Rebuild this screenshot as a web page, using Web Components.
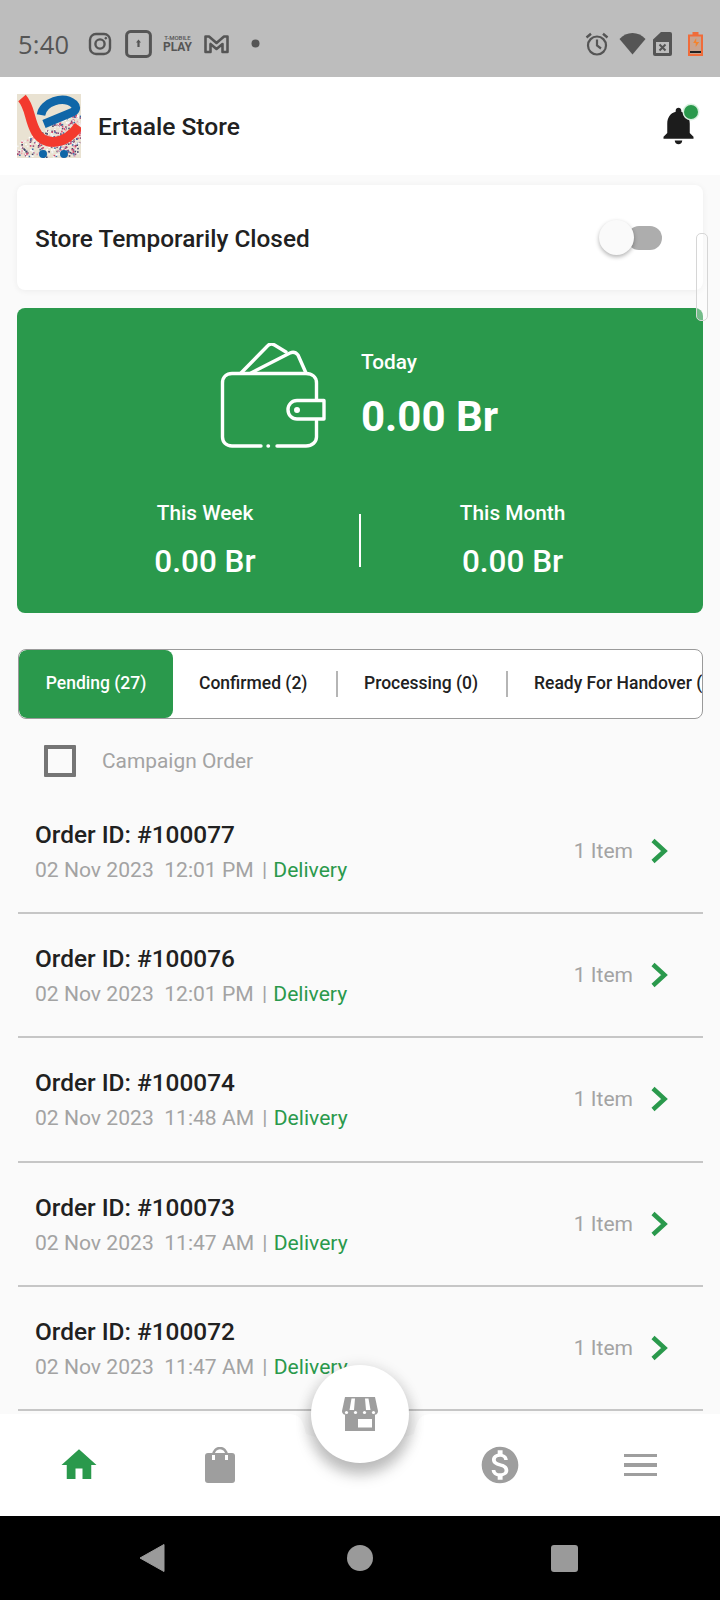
<!DOCTYPE html>
<html>
<head>
<meta charset="utf-8">
<title>Ertaale Store</title>
<style>
    html, body { margin: 0; padding: 0; background: #000; }
    body { width: 720px; height: 1600px; overflow: hidden; font-family: Roboto, "Liberation Sans", sans-serif; }
</style>
</head>
<body>
<app-screen>
    <status-bar></status-bar>
    <store-header>Ertaale Store</store-header>
    <store-toggle>Store Temporarily Closed</store-toggle>
    <earnings-card></earnings-card>
    <order-tabs></order-tabs>
    <campaign-filter>Campaign Order</campaign-filter>
    <order-row order="100077" time="12:01 PM"></order-row>
    <order-row order="100076" time="12:01 PM"></order-row>
    <order-row order="100074" time="11:48 AM"></order-row>
    <order-row order="100073" time="11:47 AM"></order-row>
    <order-row order="100072" time="11:47 AM"></order-row>
</app-screen>

<script>
const GREEN = '#2a994c';

function define(name, html, setup) {
    const template = document.createElement('template');
    template.innerHTML = html;
    customElements.define(name, class extends HTMLElement {
        constructor() {
            super();
            this.attachShadow({ mode: 'open' });
            this.shadowRoot.appendChild(template.content.cloneNode(true));
        }
        connectedCallback() {
            if (setup) setup(this, this.shadowRoot);
        }
    });
}

define('app-screen', `
<style>
    :host { display: flex; flex-direction: column; width: 720px; height: 1600px; position: relative; overflow: hidden; background: #fafafa; }
    #top { flex: none; }
    #scroll { flex: none; height: 1239px; background: #fafafa; overflow: hidden; position: relative; padding: 10px 17px 0; box-sizing: border-box; }
    #thumb { position: absolute; left: 696px; top: 58px; width: 10px; height: 86px; border: 1px solid #d6d6d6; border-radius: 5px; background: rgba(255,255,255,.35); }
</style>
<div id="top"><slot name="top"></slot></div>
<div id="scroll"><slot></slot><div id="thumb"></div></div>
<bottom-nav></bottom-nav>
<system-nav></system-nav>
`, (el) => {
    el.querySelector('status-bar').slot = 'top';
    el.querySelector('store-header').slot = 'top';
});

define('status-bar', `
<style>
    :host { display: flex; align-items: center; height: 77px; background: #bdbdbd; color: #555; padding: 10px 17px 0 18px; box-sizing: border-box; }
    #time { font: 400 25.5px "Open Sans", sans-serif; width: 70px; letter-spacing: .2px; }
    #left { display: flex; align-items: center; gap: 12.500px; }
    #right { margin-left: auto; display: flex; align-items: center; }
    svg { display: block; }
    #play { display: flex; flex-direction: column; align-items: center; width: 27px; line-height: 1; font-family: Roboto, sans-serif; font-weight: 700; }
    #play b { font-size: 6px; font-weight: 500; }
    #play span { font-size: 12px; }
</style>
<span id="time">5:40</span>
<div id="left">
    <svg width="24" height="24" viewBox="0 0 24 24" fill="none" stroke="#555" stroke-width="2.4"><rect x="2" y="2" width="20" height="20" rx="6"/><circle cx="12" cy="12" r="4.6"/><circle cx="17.8" cy="6.2" r=".9" fill="#555" stroke-width="1"/></svg>
    <svg width="27" height="28" viewBox="0 0 27 28" fill="none"><rect x="1.6" y="1.6" width="23.8" height="24.8" rx="4" stroke="#555" stroke-width="3"/><path d="M13.500 9.500l2.500 3h-1.400V17h-2.200v-4.500H11z" fill="#555"/></svg>
    <div id="play"><b>T-MOBILE</b><span>PLAY</span></div>
    <svg width="25" height="20" viewBox="0 0 25 20" fill="none" stroke="#555" stroke-width="2.6" stroke-linejoin="round"><path d="M1.500 18V2.500h3.500l7.500 6.500 7.500-6.500h3.500V18h-5V10l-6 5-6-5v8z"/></svg>
    <svg width="9" height="9" viewBox="0 0 9 9" style="margin-left:9.500px"><circle cx="4.5" cy="4.5" r="4" fill="#555"/></svg>
</div>
<div id="right">
    <svg width="24" height="24" viewBox="0 0 24 24" fill="none" stroke="#555"><circle cx="12" cy="13.5" r="9" stroke-width="2.2"/><path d="M12 7.500v6l4 3" stroke-width="2.2"/><path d="M1.500 5.500L6 1.800M22.500 5.500L18 1.800" stroke-width="2.4"/></svg>
    <svg width="27" height="23" viewBox="0 0 27 23" style="margin-left:10px"><path d="M13.500 22.500L.5 7C4 3 8.500 1 13.500 1S23 3 26.500 7z" fill="#555"/></svg>
    <svg width="19" height="24" viewBox="0 0 19 24" style="margin-left:7px"><path d="M8 0h9a2 2 0 0 1 2 2v20a2 2 0 0 1-2 2H2a2 2 0 0 1-2-2V7.500z" fill="#555"/><rect x="3" y="10" width="13" height="11" fill="#bdbdbd"/><path d="M6.500 12.500l6 6m0-6l-6 6" stroke="#555" stroke-width="2"/></svg>
    <svg width="15" height="24" viewBox="0 0 15 24" style="margin-left:16px"><path d="M4.500 0h6v2.500h4.500V24H0V2.500h4.500z" fill="#f06c3a"/><rect x="2" y="4.500" width="11" height="17.500" fill="#c9a490"/><rect x="2" y="19" width="11" height="2" fill="#222"/><path d="M8 7v4h3l-3.500 5v-4H5z" fill="#f4842e" transform="translate(.2 -1)"/></svg>
</div>
`);

define('store-header', `
<style>
    :host { display: flex; align-items: center; height: 98px; background: #fff; padding: 0 19px 0 17px; box-sizing: border-box; position: relative; }
    #logo { width: 64px; height: 64px; display: block; margin-top: -1px; }
    #name { margin-left: 17px; font: 500 24.600px Roboto, sans-serif; color: #212121; }
    #bell { margin-left: auto; position: relative; width: 45px; height: 45px; top: -1px; }
    #bell svg { display: block; }
    #dot { position: absolute; left: 28px; top: 2px; width: 14px; height: 14px; background: ${GREEN}; border-radius: 50%; box-shadow: 0 0 0 1.500px #d9f0df; }
</style>
<svg id="logo" viewBox="0 0 64 64"></svg>
<span id="name"><slot></slot></span>
<div id="bell">
    <svg width="45" height="45" viewBox="0 0 24 24"><path fill="#1c1c1c" d="M12 22c1.100 0 2-.9 2-2h-4c0 1.100.89 2 2 2zm6-6v-5c0-3.070-1.640-5.640-4.500-6.320V4c0-.83-.67-1.500-1.500-1.500s-1.500.67-1.500 1.500v.68C7.630 5.360 6 7.920 6 11v5l-2 2v1h16v-1l-2-2z"/></svg>
    <div id="dot"></div>
</div>
`, (el, root) => {
    // the logo is a busy photo-like square, so the speckle is generated
    const colours = ['#d9436a', '#3a6ea8', '#f2f2f2', '#8a4a78', '#f2f2f2', '#e9a0b0', '#ffffff', '#444466'];
    let seed = 7;
    const rnd = () => (seed = (seed * 16807) % 2147483647) / 2147483647;
    let dots = '';
    for (let i = 0; i < 650; i++) {
        const x = rnd() * 63;
        const y = 20 + rnd() * 43;
        // speckle runs as a diagonal band from lower left to upper right
        if (y < 48 - x * 0.5 || y > 70 - x * 0.15) continue;
        dots += `<rect x="${x.toFixed(1)}" y="${y.toFixed(1)}" width="1.600" height="1.600" fill="${colours[i % colours.length]}"/>`;
    }
    root.querySelector('#logo').innerHTML = `
        <rect width="64" height="64" fill="#e9e2d2"/>${dots}
        <path d="M24 21C26 8 46 1 57 10C60 13 59 16 56 18L27 30" fill="none" stroke="#0f66a8" stroke-width="8.500"/>
        <path d="M5 4C13 13 12 24 18 36C24 50 45 55 62 32" fill="none" stroke="#f33a2e" stroke-width="10"/>
        <circle cx="26" cy="60" r="4" fill="#0f66a8"/><circle cx="47" cy="60" r="4" fill="#0f66a8"/>`;
});

define('store-toggle', `
<style>
    :host { display: flex; align-items: center; height: 105px; background: #fff; border-radius: 8px; box-shadow: 0 1px 6px rgba(0,0,0,.06); padding: 0 41px 0 18px; box-sizing: border-box; font: 500 24.400px Roboto, sans-serif; color: #212121; }
    span { margin-top: 2px; }
    #switch { margin-left: auto; position: relative; width: 35px; height: 24px; background: #adadad; border-radius: 12px; }
    #knob { position: absolute; left: -28px; top: -6px; width: 35px; height: 35px; border-radius: 50%; background: #fafafa; box-shadow: 0 2px 4px rgba(0,0,0,.3); }
</style>
<span><slot></slot></span>
<div id="switch"><div id="knob"></div></div>
`);

define('earnings-card', `
<style>
    :host { display: block; height: 305px; margin-top: 18px; background: ${GREEN}; border-radius: 8px; color: #fff; font-family: Roboto, sans-serif; box-sizing: border-box; padding-top: 35px; }
    #today { display: flex; align-items: flex-start; padding-left: 203px; }
    #today svg { display: block; flex: none; }
    #today > div { margin-left: 35px; padding-top: 7px; }
    .label { font-size: 20.800px; font-weight: 500; line-height: 24px; }
    #big { font-size: 42px; font-weight: 700; line-height: 50px; margin-top: 18px; }
    #split { display: flex; align-items: center; margin-top: 52px; }
    #split > div { flex: none; text-align: center; box-sizing: border-box; }
    #week { width: 342px; padding-left: 34px; }
    #month { width: 342px; padding-right: 38px; }
    #line { width: 1.600px; height: 53px; background: #fff; }
    .amount { font-size: 31.500px; font-weight: 500; line-height: 36px; margin-top: 19px; }
</style>
<div id="today">
    <svg width="106" height="106" viewBox="0 0 106 106" fill="none" stroke="#fff" stroke-width="3.400" stroke-linecap="round" stroke-linejoin="round">
        <path d="M21 30L47 3.500C49 1 52 .5 54.500 2L66 9"/>
        <path d="M31 30L70 10C73 8.500 76 9.500 78 12L86 30"/>
        <path d="M41 103H12C6 103 2.500 99 2.500 94V40C2.500 34 6.500 30.500 12 30.500H86C92 30.500 96.500 34 96.500 40V57"/>
        <path d="M96.500 78V94C96.500 99 92 103 86 103H57"/>
        <path d="M48 103h.5"/>
        <path d="M77 57.500H104V76H77C72 76 68 72 68 66.700S72 57.500 77 57.500Z"/>
        <circle cx="77" cy="67" r="1.300" fill="#fff"/>
    </svg>
    <div>
        <div class="label">Today</div>
        <div id="big">0.00 Br</div>
    </div>
</div>
<div id="split">
    <div id="week"><div class="label">This Week</div><div class="amount">0.00 Br</div></div>
    <div id="line"></div>
    <div id="month"><div class="label">This Month</div><div class="amount">0.00 Br</div></div>
</div>
`);

define('order-tabs', `
<style>
    :host { display: flex; align-items: stretch; height: 70px; margin: 36px 0 0 1px; width: 685px; box-sizing: border-box; border: 1.500px solid #9a9a9a; border-radius: 8px; background: #fff; overflow: hidden; font: 500 17.500px Roboto, sans-serif; color: #212121; white-space: nowrap; }
    span { display: flex; align-items: center; flex: none; box-sizing: border-box; padding-bottom: 2px; }
    #active { width: 154px; background: ${GREEN}; color: #fff; border-radius: 8px; justify-content: center; }
    .tab { position: relative; padding-left: 26px; }
    .tab + .tab::before { content: ''; position: absolute; left: 0; top: 21px; width: 2px; height: 26px; background: #b5b5b5; }
    #c { width: 163px; }
    #p { width: 170px; padding-left: 28px; }
    #r { width: 197px; padding-left: 28px; }
</style>
<span id="active">Pending (27)</span>
<span class="tab" id="c">Confirmed (2)</span>
<span class="tab" id="p">Processing (0)</span>
<span class="tab" id="r">Ready For Handover (0)</span>
`);

define('campaign-filter', `
<style>
    :host { display: flex; align-items: center; height: 32px; margin: 26px 0 13px; padding-left: 27px; font: 400 20.900px Roboto, sans-serif; color: #a3a3a3; }
    #box { width: 32px; height: 32px; box-sizing: border-box; border: 4.500px solid #757575; border-radius: 1px; margin-right: 26px; }
</style>
<div id="box"></div>
<span><slot></slot></span>
`);

define('order-row', `
<style>
    :host { display: flex; align-items: flex-start; height: 124.200px; margin-left: 1px; box-sizing: border-box; border-bottom: 2px solid #c6c6c6; padding: 31px 0 0 17px; font-family: Roboto, sans-serif; }
    #text { flex: 1; }
    #id { font-size: 24.400px; font-weight: 500; line-height: 28px; color: #212121; }
    #sub { font-size: 21.100px; line-height: 26px; color: #a3a3a3; margin-top: 8px; white-space: pre; }
    #sub i { font-style: normal; margin: 0 1px 0 3px; }
    #sub b { font-weight: 400; color: ${GREEN}; }
    #items { font-size: 21px; color: #a3a3a3; line-height: 26px; margin-top: 17px; }
    svg { display: block; margin: 17px 35px 0 17px; }
</style>
<div id="text">
    <div id="id"></div>
    <div id="sub"><span id="when"></span><i> | </i><b>Delivery</b></div>
</div>
<span id="items">1 Item</span>
<svg width="18" height="26" viewBox="0 0 18 26" fill="none"><path d="M3 2.500L14.500 13L3 23.500" stroke="${GREEN}" stroke-width="4.500"/></svg>
`, (el, root) => {
    root.querySelector('#id').textContent = 'Order ID: #' + el.getAttribute('order');
    root.querySelector('#when').textContent = '02 Nov 2023  ' + el.getAttribute('time');
});

define('bottom-nav', `
<style>
    :host { display: block; flex: none; position: relative; height: 102px; }
    #shape { position: absolute; left: 0; top: 0; display: block; }
    #items { position: relative; display: grid; grid-template-columns: repeat(5, 1fr); height: 100%; padding: 0 9px; box-sizing: border-box; align-items: center; justify-items: center; }
    #items svg { display: block; }
    #fab { position: absolute; left: 311px; top: -49px; width: 98px; height: 98px; border-radius: 50%; background: #fff; box-shadow: 0 11px 16px rgba(0,0,0,.22), 0 4px 12px 6px rgba(0,0,0,.08); display: flex; align-items: center; justify-content: center; }
    #bars { display: grid; gap: 6px; width: 33px; }
    #bars i { display: block; height: 3.500px; background: #9e9e9e; }
</style>
<svg id="shape" width="720" height="102" viewBox="0 0 720 102"><path fill="#fff" d="M0 0H288C300 0 303 6 306 20L318 24H402L414 20C417 6 420 0 432 0H720V102H0Z"/></svg>
<div id="items">
    <svg width="42" height="42" viewBox="0 0 24 24"><path fill="${GREEN}" d="M10 20v-6h4v6h5v-8h3L12 3 2 12h3v8z"/></svg>
    <svg width="30" height="36" viewBox="0 0 30 36"><path d="M8.500 10V7.500a6.500 6.500 0 0 1 13 0V10" fill="none" stroke="#9e9e9e" stroke-width="2.500"/><rect y="6" width="30" height="30" rx="3" fill="#9e9e9e"/><rect x="7" y="8" width="3" height="5" fill="#fff"/><rect x="20" y="8" width="3" height="5" fill="#fff"/></svg>
    <span></span>
    <svg width="44" height="44" viewBox="0 0 24 24"><path fill="#9e9e9e" d="M12 2C6.480 2 2 6.480 2 12s4.480 10 10 10 10-4.480 10-10S17.520 2 12 2zm1.410 16.090V20h-2.670v-1.930c-1.710-.36-3.160-1.460-3.270-3.400h1.960c.1 1.050.82 1.870 2.650 1.870 1.960 0 2.400-.98 2.400-1.590 0-.83-.44-1.610-2.670-2.140-2.480-.6-4.180-1.620-4.180-3.670 0-1.720 1.390-2.840 3.110-3.210V4h2.670v1.950c1.860.45 2.790 1.860 2.850 3.390H14.300c-.05-1.110-.64-1.870-2.220-1.870-1.500 0-2.400.68-2.400 1.640 0 .84.65 1.390 2.670 1.910s4.180 1.390 4.180 3.910c-.01 1.830-1.380 2.830-3.120 3.160z"/></svg>
    <div id="bars"><i></i><i></i><i></i></div>
</div>
<div id="fab">
    <svg width="36" height="34" viewBox="0 0 36 34">
        <path fill="#9e9e9e" d="M3 0H33L36 14C36 17 33.500 18 31.500 18H4.500C2.500 18 0 17 0 14Z"/>
        <path fill="#fff" d="M9.500 1.500H13L12 13H7.500ZM23 1.500H26.500L28.500 13H24Z"/>
        <g fill="#fff"><circle cx="4.500" cy="15.500" r="1.600"/><circle cx="13.500" cy="15.500" r="1.600"/><circle cx="22.500" cy="15.500" r="1.600"/><circle cx="31.500" cy="15.500" r="1.600"/></g>
        <path fill="#9e9e9e" fill-rule="evenodd" d="M3 18H33V34H3ZM16 22V30.500H30V22Z"/>
    </svg>
</div>
`);

define('system-nav', `
<style>
    :host { display: flex; flex: none; align-items: center; height: 84px; background: #000; position: relative; padding-left: 140px; box-sizing: border-box; }
    svg { display: block; }
    #dot { width: 26px; height: 26px; border-radius: 50%; background: #9a9a9a; margin-left: 182px; }
    #sq { width: 27px; height: 27px; border-radius: 3px; background: #9a9a9a; margin-left: 178px; }
</style>
<svg width="25" height="28" viewBox="0 0 25 28"><path fill="#9a9a9a" d="M0 14L24 0.500V27.500Z" stroke="#9a9a9a" stroke-linejoin="round"/></svg>
<div id="dot"></div>
<div id="sq"></div>
`);
</script>
</body>
</html>
